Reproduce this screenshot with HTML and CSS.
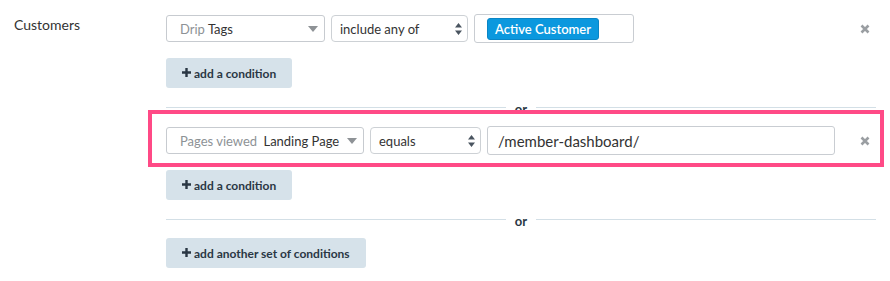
FILE: index.html
```html
<!DOCTYPE html>
<html lang="en">
<head>
    <meta charset="UTF-8">
    <title>Segment conditions</title>
    <link rel="stylesheet" href="styles.css">
</head>
<body>
    <div class="segment">
        <div class="segment-label">Customers</div>
        <div class="conditions">
            <div class="condition-row">
                <div class="select select-field w-159">
                    <span class="muted">Drip</span> Tags
                    <svg class="caret" width="10" height="6" viewBox="0 0 10 6"><path d="M0 0h10L5 6z" fill="#8e9296"/></svg>
                </div>
                <div class="select select-op w-137">
                    include any of
                    <svg class="updown" width="7" height="12" viewBox="0 0 7 12"><path d="M3.5 0L7 4.5H0zM0 7.5h7L3.5 12z" fill="#4a5560"/></svg>
                </div>
                <div class="input w-160">
                    <span class="tag">Active Customer</span>
                </div>
                <button class="remove" title="Remove">
                    <svg width="10" height="10" viewBox="0 0 10 10"><path d="M1.5 1.5l7 7M8.5 1.5l-7 7" stroke="#9a9ea2" stroke-width="2.6"/></svg>
                </button>
            </div>
            <button class="btn"><svg class="plus" width="9" height="9" viewBox="0 0 9 9"><path d="M4.5 0v9M0 4.5h9" stroke="#2a3744" stroke-width="2.4"/></svg>add a condition</button>

            <div class="divider"><span>or</span></div>

            <div class="condition-row highlighted">
                <div class="select select-field w-198">
                    <span class="muted">Pages viewed</span>&nbsp;Landing Page
                    <svg class="caret" width="10" height="6" viewBox="0 0 10 6"><path d="M0 0h10L5 6z" fill="#8e9296"/></svg>
                </div>
                <div class="select select-op w-111">
                    equals
                    <svg class="updown" width="7" height="12" viewBox="0 0 7 12"><path d="M3.5 0L7 4.5H0zM0 7.5h7L3.5 12z" fill="#4a5560"/></svg>
                </div>
                <div class="input input-text w-348">/member-dashboard/</div>
                <button class="remove" title="Remove">
                    <svg width="10" height="10" viewBox="0 0 10 10"><path d="M1.5 1.5l7 7M8.5 1.5l-7 7" stroke="#9a9ea2" stroke-width="2.6"/></svg>
                </button>
            </div>
            <button class="btn"><svg class="plus" width="9" height="9" viewBox="0 0 9 9"><path d="M4.5 0v9M0 4.5h9" stroke="#2a3744" stroke-width="2.4"/></svg>add a condition</button>

            <div class="divider"><span>or</span></div>

            <button class="btn"><svg class="plus" width="9" height="9" viewBox="0 0 9 9"><path d="M4.5 0v9M0 4.5h9" stroke="#2a3744" stroke-width="2.4"/></svg>add another set of conditions</button>
        </div>
    </div>
</body>
</html>
```

FILE: styles.css
```css
* {
    margin: 0;
    padding: 0;
    box-sizing: border-box;
    font-family: 'Lato', 'Open Sans', sans-serif;
}

body {
    background: #fff;
    color: #333;
}

.segment {
    display: grid;
    grid-template-columns: 152px 1fr;
    padding: 14px 14px 0 14px;
}

.segment-label {
    font-size: 14px;
    line-height: 20px;
    padding-top: 1px;
    color: #333;
}

.conditions {
    display: flex;
    flex-direction: column;
    align-items: flex-start;
}

.condition-row {
    display: flex;
    align-items: center;
    gap: 6px;
    width: 100%;
    height: 29px;
    margin-bottom: 15px;
}

.highlighted {
    position: relative;
}

.highlighted::after {
    content: '';
    position: absolute;
    top: -16px;
    left: -18px;
    right: -8px;
    bottom: -12px;
    border: 4px solid #ff4a86;
    pointer-events: none;
}

.select {
    position: relative;
    display: flex;
    align-items: center;
    height: 27px;
    border: 1px solid #c7cbd0;
    border-radius: 3px;
    font-size: 13px;
    color: #333;
    white-space: nowrap;
}

.select-field {
    padding-left: 13px;
}

.select-op {
    padding-left: 8px;
    border-radius: 4px;
    border-color: #cdd1d5;
}

.muted {
    color: #8d9296;
    margin-right: 3px;
}

.caret {
    position: absolute;
    right: 6px;
    top: 10px;
}

.updown {
    position: absolute;
    right: 5px;
    top: 7px;
}

.input {
    display: flex;
    align-items: center;
    height: 29px;
    border: 1px solid #c9cdd2;
    border-radius: 3px;
    padding-left: 12px;
}

.input-text {
    padding-left: 10px;
    font-size: 15px;
    color: #333;
}

.tag {
    display: inline-block;
    height: 22px;
    line-height: 20px;
    padding: 0 7px;
    background: #0b98de;
    border: 1px solid #0a85c5;
    border-radius: 3px;
    color: #fff;
    font-size: 13px;
    font-weight: 600;
}

.remove {
    margin-left: auto;
    width: 22px;
    height: 22px;
    display: flex;
    align-items: center;
    justify-content: center;
    background: none;
    border: none;
    cursor: pointer;
}

.btn {
    display: flex;
    align-items: center;
    gap: 3px;
    height: 30px;
    padding: 0 16px;
    background: #d6e2ea;
    border: none;
    border-radius: 3px;
    color: #2a3744;
    font-size: 12px;
    font-weight: 700;
    cursor: pointer;
}

.plus {
    margin-top: -1px;
}

.divider {
    display: flex;
    align-items: center;
    width: 100%;
    height: 38px;
}

.divider::before,
.divider::after {
    content: '';
    flex: 1;
    height: 1px;
    background: #d3dfe6;
}

.divider span {
    padding: 0 9px;
    font-size: 13px;
    font-weight: 700;
    color: #2a3744;
    line-height: 1;
    margin-top: 4px;
}

.w-159 { width: 159px; }
.w-137 { width: 137px; }
.w-160 { width: 160px; }
.w-198 { width: 198px; }
.w-111 { width: 111px; }
.w-348 { width: 348px; }
```
